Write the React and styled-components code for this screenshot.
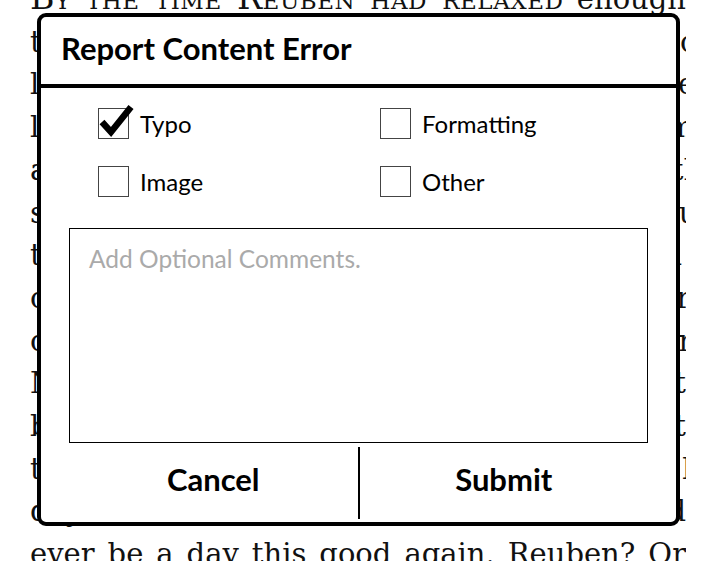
import React from "react";
import styled, { createGlobalStyle } from "styled-components";

const bookLines = [
  { small: "By the time Reuben had relaxed", rest: " enough" },
  { rest: "to notice anything else, the light had gone gold" },
  { rest: "lake had turned the color of an old copper kettle. Our" },
  { rest: "lines were still out, but neither of us cared much" },
  { rest: "about the fish anymore. He leaned back on the oar" },
  { rest: "sat with his hat pulled low, humming some tune I" },
  { rest: "that I'd never heard before and never would hear one" },
  { rest: "could feel the boat turning slowly in the current, the" },
  { rest: "creak of the oarlocks the only sound for a long while." },
  { rest: "Neither of us said it, but we both knew what had been" },
  { rest: "between us all summer, waiting for the right moment" },
  { rest: "to be spoken aloud. It was the end of a very long, fine" },
  { rest: "day, and I wondered whether there would" },
  { rest: "ever be a day this good again. Reuben? Or" },
];

export default function App() {
  return (
    <Page>
      <GlobalStyle />
      <Book>
        {bookLines.map((line, index) => (
          <BookLine key={index}>
            {line.small && <SmallCaps>{line.small}</SmallCaps>}
            {line.rest}
          </BookLine>
        ))}
      </Book>

      <Dialog>
        <Header>
          <Title>Report Content Error</Title>
        </Header>
        <Options>
          <Option>
            <Box>
              <CheckMark viewBox="0 0 36 36">
                <path d="M4 19 L13 29 L33 4" />
              </CheckMark>
            </Box>
            <Label>Typo</Label>
          </Option>
          <Option>
            <Box />
            <Label>Formatting</Label>
          </Option>
          <Option>
            <Box />
            <Label>Image</Label>
          </Option>
          <Option>
            <Box />
            <Label>Other</Label>
          </Option>
        </Options>
        <Comments placeholder="Add Optional Comments." />
        <Actions>
          <ActionButton>Cancel</ActionButton>
          <Divider />
          <ActionButton>Submit</ActionButton>
        </Actions>
      </Dialog>
    </Page>
  );
}

const GlobalStyle = createGlobalStyle`
  html, body {
    margin: 0;
    padding: 0;
    background: #fff;
  }
  #root {
    width: 714px;
    height: 561px;
  }
`;

const Page = styled.div`
  position: relative;
  width: 714px;
  height: 561px;
  overflow: hidden;
  background: #fff;
`;

const Book = styled.div`
  margin-top: -23px;
  padding: 0 28px 0 30px;
  font-family: "DejaVu Serif", "Liberation Serif", serif;
  font-size: 29px;
  line-height: 42.7px;
  color: #111;
`;

const BookLine = styled.div`
  white-space: nowrap;
  text-align: justify;
  text-align-last: justify;
  overflow: hidden;
`;

const SmallCaps = styled.span`
  font-variant: small-caps;
  font-size: 1.15em;
  letter-spacing: 0.5px;
`;

const Dialog = styled.div`
  position: absolute;
  left: 37px;
  top: 13px;
  width: 643px;
  height: 513px;
  box-sizing: border-box;
  display: flex;
  flex-direction: column;
  background: #fff;
  border: 4px solid #000;
  border-radius: 9px;
  font-family: "Lato", "Liberation Sans", sans-serif;
  color: #000;
`;

const Header = styled.div`
  height: 71px;
  flex-shrink: 0;
  display: flex;
  align-items: center;
  padding: 0 0 6px 20px;
  box-sizing: border-box;
  border-bottom: 4px solid #000;
`;

const Title = styled.h1`
  margin: 0;
  font-size: 31px;
  font-weight: 700;
  letter-spacing: 0;
`;

const Options = styled.div`
  display: grid;
  grid-template-columns: 282px 1fr;
  row-gap: 27px;
  padding: 20px 0 0 57px;
`;

const Option = styled.div`
  display: flex;
  align-items: center;
  gap: 11px;
`;

const Box = styled.div`
  position: relative;
  width: 31px;
  height: 31px;
  box-sizing: border-box;
  border: 1px solid #444;
  background: #fff;
`;

const CheckMark = styled.svg`
  position: absolute;
  left: -1px;
  top: -6px;
  width: 36px;
  height: 36px;
  fill: none;
  stroke: #000;
  stroke-width: 6.5;
  stroke-linecap: butt;
  stroke-linejoin: miter;
`;

const Label = styled.span`
  font-size: 24px;
  font-weight: 400;
`;

const Comments = styled.textarea`
  display: block;
  margin: 31px 28px 0;
  height: 215px;
  flex-shrink: 0;
  box-sizing: border-box;
  border: 1px solid #000;
  border-radius: 0;
  padding: 15px 19px;
  font-family: "Lato", "Liberation Sans", sans-serif;
  font-size: 24.5px;
  resize: none;
  outline: none;
  &::placeholder {
    color: #aaa;
  }
`;

const Actions = styled.div`
  flex: 1;
  display: flex;
  margin: 0 28px;
`;

const ActionButton = styled.button`
  flex: 1;
  border: none;
  background: none;
  padding: 0 0 8px;
  font-family: "Lato", "Liberation Sans", sans-serif;
  font-size: 31px;
  font-weight: 700;
  color: #000;
`;

const Divider = styled.div`
  width: 2px;
  margin: 4px 0 3px;
  background: #000;
`;
